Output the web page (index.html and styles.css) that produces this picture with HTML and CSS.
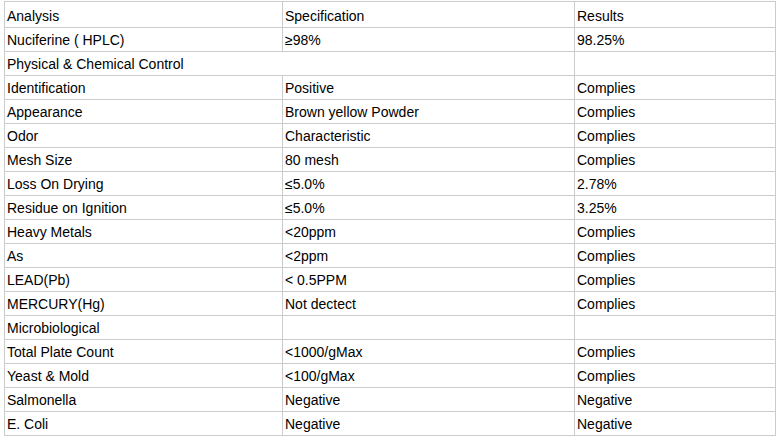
FILE: index.html
```html
<!DOCTYPE html>
<html>
<head>
<meta charset="utf-8">
<link rel="stylesheet" href="styles.css">
</head>
<body>
<table class="spec">
<colgroup><col class="c1"><col class="c2"><col class="c3"></colgroup>
<tr class="first"><td>Analysis</td><td>Specification</td><td>Results</td></tr>
<tr><td>Nuciferine ( HPLC)</td><td>≥98%</td><td>98.25%</td></tr>
<tr><td colspan="2">Physical &amp; Chemical Control</td><td></td></tr>
<tr><td>Identification</td><td>Positive</td><td>Complies</td></tr>
<tr><td>Appearance</td><td>Brown yellow Powder</td><td>Complies</td></tr>
<tr><td>Odor</td><td>Characteristic</td><td>Complies</td></tr>
<tr><td>Mesh Size</td><td>80 mesh</td><td>Complies</td></tr>
<tr><td>Loss On Drying</td><td>≤5.0%</td><td>2.78%</td></tr>
<tr><td>Residue on Ignition</td><td>≤5.0%</td><td>3.25%</td></tr>
<tr><td>Heavy Metals</td><td>&lt;20ppm</td><td>Complies</td></tr>
<tr><td>As</td><td>&lt;2ppm</td><td>Complies</td></tr>
<tr><td>LEAD(Pb)</td><td>&lt; 0.5PPM</td><td>Complies</td></tr>
<tr><td>MERCURY(Hg)</td><td>Not dectect</td><td>Complies</td></tr>
<tr><td>Microbiological</td><td></td><td></td></tr>
<tr><td>Total Plate Count</td><td>&lt;1000/gMax</td><td>Complies</td></tr>
<tr><td>Yeast &amp; Mold</td><td>&lt;100/gMax</td><td>Complies</td></tr>
<tr><td>Salmonella</td><td>Negative</td><td>Negative</td></tr>
<tr><td>E. Coli</td><td>Negative</td><td>Negative</td></tr>
</table>
</body>
</html>
```
FILE: styles.css
```css
html, body {
  margin: 0;
  padding: 0;
  background: #fff;
}
body {
  padding: 1px 0 0 4px;
  font-family: "Liberation Sans", Arial, sans-serif;
  font-size: 14px;
  color: #000;
}
.spec {
  border-collapse: collapse;
  table-layout: fixed;
  width: 771px;
}
.c1 { width: 278px; }
.c2 { width: 292px; }
.c3 { width: 201px; }
.spec td {
  border: 1px solid #ccc;
  padding: 1px 2px 0;
  height: 22px;
  line-height: 22px;
  vertical-align: top;
  white-space: nowrap;
  overflow: hidden;
}
.spec tr.first td {
  padding-top: 3px;
}
```
